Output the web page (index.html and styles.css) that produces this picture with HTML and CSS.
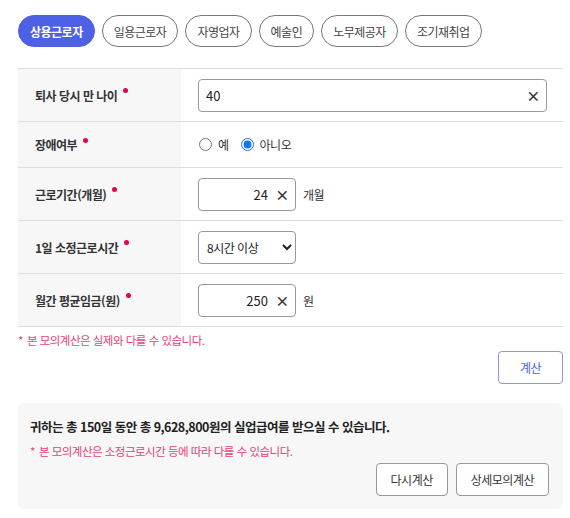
FILE: index.html
```html
<!DOCTYPE html>
<html lang="ko">
<head>
  <meta charset="UTF-8" />
  <title>실업급여 모의계산</title>
  <link rel="stylesheet" href="styles.css">
</head>
<body>
  <nav class="tabs">
    <button class="tab active">상용근로자</button>
    <button class="tab">일용근로자</button>
    <button class="tab">자영업자</button>
    <button class="tab">예술인</button>
    <button class="tab">노무제공자</button>
    <button class="tab">조기재취업</button>
  </nav>

  <!-- 입력 폼 -->
  <div class="form-table">
    <div class="row row-tall">
      <div class="label">퇴사 당시 만 나이<span class="req"></span></div>
      <div class="value">
        <div class="field field-wide">
          <input type="text" value="40">
          <button class="clear">×</button>
        </div>
      </div>
    </div>
    <div class="row">
      <div class="label">장애여부<span class="req"></span></div>
      <div class="value">
        <label class="radio"><input type="radio" name="disabled"> 예</label>
        <label class="radio"><input type="radio" name="disabled" checked> 아니오</label>
      </div>
    </div>
    <div class="row row-tall">
      <div class="label">근로기간(개월)<span class="req"></span></div>
      <div class="value">
        <div class="field field-num">
          <input type="text" value="24">
          <button class="clear">×</button>
        </div>
        <span class="unit">개월</span>
      </div>
    </div>
    <div class="row row-tall">
      <div class="label">1일 소정근로시간<span class="req"></span></div>
      <div class="value">
        <select class="select">
          <option>8시간 이상</option>
          <option>7시간</option>
          <option>6시간</option>
        </select>
      </div>
    </div>
    <div class="row row-tall">
      <div class="label">월간 평균임금(원)<span class="req"></span></div>
      <div class="value">
        <div class="field field-num">
          <input type="text" value="250">
          <button class="clear">×</button>
        </div>
        <span class="unit">원</span>
      </div>
    </div>
  </div>

  <p class="note">본 모의계산은 실제와 다를 수 있습니다.</p>
  <div class="actions">
    <button class="btn-calc">계산</button>
  </div>

  <!-- 결과 -->
  <section class="result">
    <p class="result-text">귀하는 총 150일 동안 총 9,628,800원의 실업급여를 받으실 수 있습니다.</p>
    <p class="note">본 모의계산은 소정근로시간 등에 따라 다를 수 있습니다.</p>
    <div class="result-actions">
      <button class="btn">다시계산</button>
      <button class="btn">상세모의계산</button>
    </div>
  </section>
</body>
</html>
```

FILE: styles.css
```css
* {
  box-sizing: border-box;
  margin: 0;
  padding: 0;
}
body {
  font-family: "Noto Sans CJK KR", "Noto Sans", sans-serif;
  background: #fff;
  color: #222;
  padding: 15px 7px 0 18px;
  font-size: 12px;
  letter-spacing: -0.5px;
}
button, input, select {
  font-family: inherit;
  letter-spacing: inherit;
}
.tabs {
  display: flex;
  gap: 7px;
  margin-bottom: 21px;
}
.tab {
  height: 32px;
  padding: 0 11px;
  border: 1px solid #777;
  border-radius: 16px;
  background: #fff;
  color: #444;
  font-size: 12px;
}
.tab.active {
  background: #4c61e4;
  border-color: #4c61e4;
  color: #fff;
  font-weight: bold;
}
.form-table {
  border-top: 1px solid #ddd;
}
.row {
  display: flex;
  height: 46px;
  border-bottom: 1px solid #ddd;
}
.row-tall {
  height: 53px;
}
.label {
  width: 163px;
  background: #f7f7f7;
  display: flex;
  align-items: center;
  padding-left: 17px;
  font-weight: bold;
  color: #333;
}
.req {
  display: inline-block;
  width: 5px;
  height: 5px;
  border-radius: 50%;
  background: #e4004f;
  margin: 0 0 9px 6px;
}
.value {
  flex: 1;
  display: flex;
  align-items: center;
  padding-left: 17px;
}
.field {
  display: flex;
  align-items: center;
  height: 33px;
  border: 1px solid #999;
  border-radius: 4px;
  background: #fff;
}
.field input {
  flex: 1;
  min-width: 0;
  border: none;
  outline: none;
  font-size: 13px;
  letter-spacing: 0;
  color: #222;
  padding-left: 7px;
  background: transparent;
}
.field-wide {
  width: 349px;
}
.field-num {
  width: 98px;
}
.field-num input {
  text-align: right;
  padding-right: 4px;
}
.clear {
  border: none;
  background: none;
  color: #333;
  font-size: 14px;
  font-weight: bold;
  width: 20px;
  margin-right: 3px;
}
.unit {
  margin-left: 7px;
  color: #333;
}
.radio {
  display: flex;
  align-items: center;
  margin-right: 11px;
  color: #333;
}
.radio input {
  margin: 0 6px 0 1px;
  width: 13px;
  height: 13px;
  accent-color: #1a73e8;
}
.select {
  width: 98px;
  height: 33px;
  border: 1px solid #999;
  border-radius: 4px;
  background: #fff;
  font-size: 12px;
  color: #222;
  padding-left: 4px;
}
.note {
  color: #e8407a;
  font-size: 11.5px;
  margin-top: 5px;
}
.note::before {
  content: "*";
  margin-right: 4px;
}
.actions {
  display: flex;
  justify-content: flex-end;
  margin-top: 3px;
}
.btn-calc {
  width: 65px;
  height: 33px;
  border: 1px solid #8794f0;
  border-radius: 4px;
  background: #fff;
  color: #4c61e4;
  font-size: 12px;
}
.result {
  margin-top: 19px;
  background: #f7f7f7;
  border-radius: 6px;
  padding: 14px 14px 13px 12px;
}
.result-text {
  font-size: 12.5px;
  font-weight: bold;
  color: #222;
}
.result .note {
  margin-top: 7px;
}
.result-actions {
  display: flex;
  justify-content: flex-end;
  gap: 8px;
  margin-top: 4px;
}
.btn {
  height: 33px;
  padding: 0 14px;
  border: 1px solid #999;
  border-radius: 4px;
  background: #fff;
  color: #333;
  font-size: 12px;
}
```
